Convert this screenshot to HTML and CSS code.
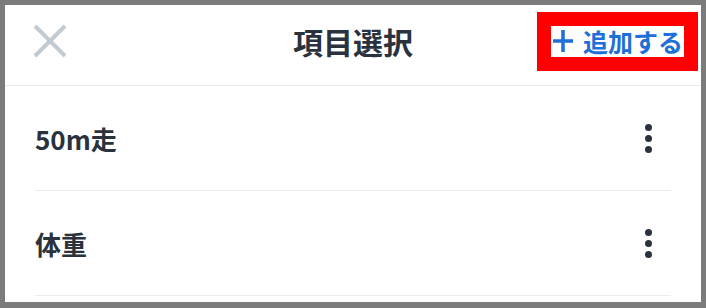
FILE: index.html
```html
<!DOCTYPE html>
<html lang="ja">
<head>
<meta charset="utf-8">
<link rel="stylesheet" href="styles.css">
</head>
<body>
<div class="frame">
  <header class="header">
    <div class="header-left">
      <svg class="close" width="36" height="36" viewBox="0 0 36 36"><path d="M3 3L33 33M33 3L3 33" stroke="#c2cad2" stroke-width="4" stroke-linecap="butt"/></svg>
    </div>
    <h1 class="title">項目選択</h1>
    <div class="header-right">
      <div class="highlight">
        <span class="add">
          <svg class="plus" width="20" height="22" viewBox="0 0 20 22"><path d="M10 0V22M0 11H20" stroke="#1e6fd8" stroke-width="3.5"/></svg>
          <span class="add-text">追加する</span>
        </span>
      </div>
    </div>
  </header>
  <ul class="list">
    <li class="row"><span class="label">50m走</span><span class="more"><i></i><i></i><i></i></span></li>
    <li class="row"><span class="label">体重</span><span class="more"><i></i><i></i><i></i></span></li>
  </ul>
</div>
</body>
</html>
```
FILE: styles.css
```css
* { box-sizing: border-box; }
html, body { margin: 0; padding: 0; background: #fff; }
body {
  font-family: "Noto Sans CJK JP", "Noto Sans", sans-serif;
  color: #29323d;
}
.frame {
  width: 706px;
  height: 308px;
  border: 5px solid #7b7b7b;
  border-bottom-width: 6px;
  background: #fff;
  overflow: hidden;
}
.header {
  height: 81px;
  padding-bottom: 8px;
  border-bottom: 1px solid #e6ecf1;
  display: grid;
  grid-template-columns: 1fr auto 1fr;
  align-items: center;
}
.header-left { padding-left: 27px; display: flex; align-items: center; }
.close { display: block; }
.title {
  margin: 0;
  font-size: 30px;
  font-weight: 700;
  line-height: 36px;
  color: #29323d;
}
.header-right { display: flex; justify-content: flex-end; padding-right: 3px; }
.highlight {
  border: 14px solid #ff0000;
  background: #fff;
}
.add {
  display: flex;
  align-items: center;
  height: 31px;
  padding: 0 1px 0 2px;
  color: #1e6fd8;
  font-size: 25px;
  font-weight: 700;
  line-height: 31px;
}
.plus { display: block; margin-right: 10px; }
.list { list-style: none; margin: 0 30px; padding: 0; }
.row {
  height: 105px;
  border-bottom: 1px solid #e9edf1;
  display: flex;
  align-items: center;
  justify-content: space-between;
  padding-right: 19px;
}
.label { font-size: 26px; font-weight: 700; color: #29323d; }
.more { display: flex; flex-direction: column; gap: 4px; }
.more i { display: block; width: 7px; height: 7px; border-radius: 50%; background: #29323d; }
```
